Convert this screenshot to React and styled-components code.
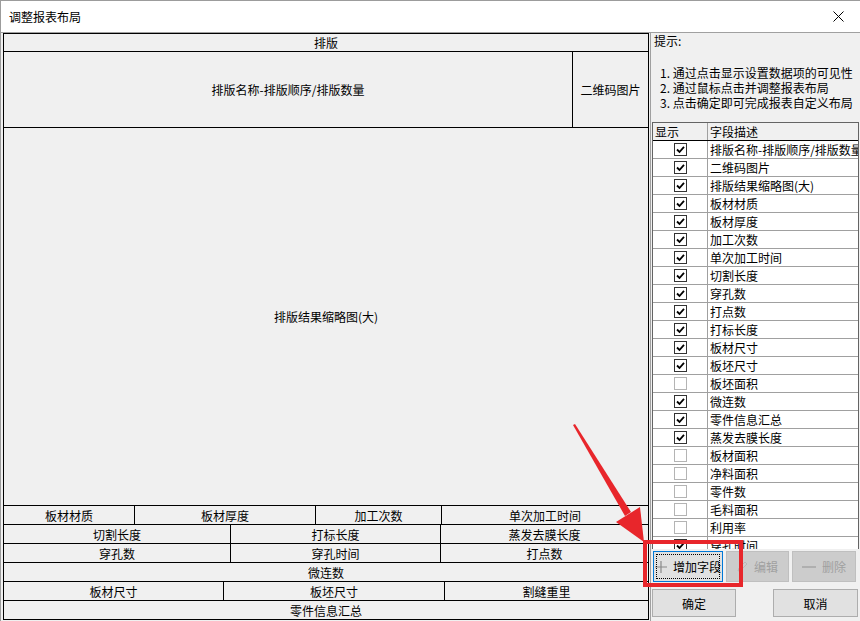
import React from 'react'
import styled, { createGlobalStyle } from 'styled-components'

const GlobalStyle = createGlobalStyle`
  html, body {
    margin: 0;
    padding: 0;
    background: #f0f0f0;
  }
  * { box-sizing: border-box; }
`

const Window = styled.div`
  position: relative;
  width: 860px;
  height: 621px;
  display: flex;
  flex-direction: column;
  background: #f0f0f0;
  border-top: 1px solid #9c9c9c;
  border-left: 1px solid #9c9c9c;
  font-family: "Noto Sans CJK SC", "Noto Sans", sans-serif;
  font-size: 12px;
  color: #000;
  overflow: hidden;
`

const TitleBar = styled.div`
  height: 31px;
  flex: none;
  background: #fff;
  display: flex;
  align-items: center;
  justify-content: space-between;
  padding: 0 16px 0 8px;
  font-size: 12px;
  line-height: 1;
`

const Body = styled.div`
  flex: 1;
  display: flex;
  min-height: 0;
  border-top: 1px solid #a0a0a0;
`

const LayoutPanel = styled.div`
  width: 646px;
  margin: 0 0 1px 2px;
  border: 1px solid #000;
  display: flex;
  flex-direction: column;
  background: #f0f0f0;
`

const Row = styled.div`
  display: flex;
  flex: ${p => (p.$grow ? 1 : 'none')};
  height: ${p => (p.$h ? `${p.$h}px` : 'auto')};
  border-bottom: 1px solid #000;
  &:last-child {
    border-bottom: none;
  }
`

const Cell = styled.div`
  display: flex;
  align-items: center;
  justify-content: center;
  flex: ${p => (p.$w ? 'none' : 1)};
  width: ${p => (p.$w ? `${p.$w}px` : 'auto')};
  border-right: 1px solid #000;
  white-space: nowrap;
  overflow: hidden;
  &:last-child {
    border-right: none;
  }
`

const SidePanel = styled.div`
  flex: 1;
  display: flex;
  flex-direction: column;
  margin-left: 1px;
  border-left: 1px solid #a0a0a0;
  padding: 0 1px 4px 1px;
  min-width: 0;
`

const HintTitle = styled.div`
  line-height: 15px;
  padding-left: 2px;
`

const HintList = styled.ol`
  margin: 17px 0 12px 0;
  padding: 0 0 0 8px;
  list-style: none;
  line-height: 15px;
  li {
    white-space: nowrap;
  }
`

const TableWrap = styled.div`
  flex: 1;
  min-height: 0;
  overflow: hidden;
  border: 1px solid #646464;
  border-bottom: none;
  background: #fff;
`

const TRow = styled.div`
  display: flex;
  height: 18px;
  background: ${p => (p.$head ? '#f0f0f0' : '#fff')};
  border-bottom: 1px solid ${p => (p.$head ? '#000' : '#a0a0a0')};
`

const TCell = styled.div`
  display: flex;
  align-items: center;
  justify-content: ${p => (p.$center ? 'center' : 'flex-start')};
  width: ${p => (p.$w ? `${p.$w}px` : 'auto')};
  flex: ${p => (p.$w ? 'none' : 1)};
  padding-left: ${p => (p.$center ? 0 : 2)}px;
  border-right: 1px solid #a0a0a0;
  white-space: nowrap;
  overflow: hidden;
  line-height: 1;
  &:last-child {
    border-right: none;
  }
`

const Box = styled.span`
  width: 13px;
  height: 13px;
  border: 1px solid ${p => (p.$on ? '#333' : '#b4b4b4')};
  background: #fff;
  display: flex;
  align-items: center;
  justify-content: center;
`

const ToolRow = styled.div`
  display: flex;
  gap: 3px;
  height: 31px;
  margin: 2px 0 0 1px;
`

const ToolButton = styled.button`
  height: 31px;
  width: ${p => p.$w}px;
  display: flex;
  align-items: center;
  justify-content: center;
  gap: 6px;
  padding: 0;
  font: inherit;
  font-size: 12px;
  color: ${p => (p.disabled ? '#a0a0a0' : '#000')};
  background: ${p => (p.disabled ? '#cccccc' : '#e1e1e1')};
  border: 1px solid ${p => (p.$focus ? '#0078d7' : p.disabled ? '#bfbfbf' : '#adadad')};
  outline: ${p => (p.$focus ? '1px dotted #000' : 'none')};
  outline-offset: -4px;
`

const FootRow = styled.div`
  display: flex;
  justify-content: space-between;
  margin-top: 7px;
  height: 28px;
  padding-right: 1px;
`

const FootButton = styled.button`
  width: ${p => p.$w}px;
  height: 28px;
  font: inherit;
  font-size: 12px;
  color: #000;
  background: #e1e1e1;
  border: 1px solid #adadad;
  padding: 0;
`

const Overlay = styled.svg`
  position: absolute;
  top: -1px;
  left: -1px;
  pointer-events: none;
`

const fields = [
  ['排版名称-排版顺序/排版数量', true],
  ['二维码图片', true],
  ['排版结果缩略图(大)', true],
  ['板材材质', true],
  ['板材厚度', true],
  ['加工次数', true],
  ['单次加工时间', true],
  ['切割长度', true],
  ['穿孔数', true],
  ['打点数', true],
  ['打标长度', true],
  ['板材尺寸', true],
  ['板坯尺寸', true],
  ['板坯面积', false],
  ['微连数', true],
  ['零件信息汇总', true],
  ['蒸发去膜长度', true],
  ['板材面积', false],
  ['净料面积', false],
  ['零件数', false],
  ['毛料面积', false],
  ['利用率', false],
  ['穿孔时间', true],
  ['割缝重里', true],
]

const Check = ({ on }) => (
  <Box $on={on}>
    {on && (
      <svg width="9" height="9" viewBox="0 0 9 9">
        <path d="M1 4.5 L3.5 7 L8 1.8" fill="none" stroke="#000" strokeWidth="1.8" />
      </svg>
    )}
  </Box>
)

export default function App() {
  return (
    <>
      <GlobalStyle />
      <Window>
        <TitleBar>
          <span>调整报表布局</span>
          <svg width="11" height="11" viewBox="0 0 11 11">
            <path d="M0.5 0.5 L10.5 10.5 M10.5 0.5 L0.5 10.5" stroke="#000" strokeWidth="1" />
          </svg>
        </TitleBar>
        <Body>
          <LayoutPanel>
            <Row $h={18}>
              <Cell>排版</Cell>
            </Row>
            <Row $h={76}>
              <Cell>排版名称-排版顺序/排版数量</Cell>
              <Cell $w={75}>二维码图片</Cell>
            </Row>
            <Row $grow>
              <Cell>排版结果缩略图(大)</Cell>
            </Row>
            <Row $h={19}>
              <Cell $w={131}>板材材质</Cell>
              <Cell $w={181}>板材厚度</Cell>
              <Cell $w={126}>加工次数</Cell>
              <Cell>单次加工时间</Cell>
            </Row>
            <Row $h={19}>
              <Cell $w={227}>切割长度</Cell>
              <Cell $w={210}>打标长度</Cell>
              <Cell>蒸发去膜长度</Cell>
            </Row>
            <Row $h={19}>
              <Cell $w={227}>穿孔数</Cell>
              <Cell $w={210}>穿孔时间</Cell>
              <Cell>打点数</Cell>
            </Row>
            <Row $h={19}>
              <Cell>微连数</Cell>
            </Row>
            <Row $h={19}>
              <Cell $w={220}>板材尺寸</Cell>
              <Cell $w={221}>板坯尺寸</Cell>
              <Cell>割缝重里</Cell>
            </Row>
            <Row $h={18}>
              <Cell>零件信息汇总</Cell>
            </Row>
          </LayoutPanel>

          <SidePanel>
            <HintTitle>提示:</HintTitle>
            <HintList>
              <li>1. 通过点击显示设置数据项的可见性</li>
              <li>2. 通过鼠标点击并调整报表布局</li>
              <li>3. 点击确定即可完成报表自定义布局</li>
            </HintList>
            <TableWrap>
              <TRow $head>
                <TCell $w={55}>显示</TCell>
                <TCell>字段描述</TCell>
              </TRow>
              {fields.map(([name, on]) => (
                <TRow key={name}>
                  <TCell $w={55} $center>
                    <Check on={on} />
                  </TCell>
                  <TCell>{name}</TCell>
                </TRow>
              ))}
            </TableWrap>
            <ToolRow>
              <ToolButton $w={70} $focus>
                <svg width="12" height="12" viewBox="0 0 12 12">
                  <path d="M6 0 V12 M0 6 H12" stroke="#8a8a8a" strokeWidth="1.2" />
                </svg>
                增加字段
              </ToolButton>
              <ToolButton $w={63} disabled>
                <svg width="11" height="11" viewBox="0 0 11 11">
                  <path d="M1 10 L2 7 L8 1 L10 3 L4 9 Z" fill="none" stroke="#b8b8b8" strokeWidth="1" />
                </svg>
                编辑
              </ToolButton>
              <ToolButton $w={64} disabled>
                <svg width="14" height="4" viewBox="0 0 14 4">
                  <path d="M0 2 H14" stroke="#a8a8a8" strokeWidth="1.6" />
                </svg>
                删除
              </ToolButton>
            </ToolRow>
            <FootRow>
              <FootButton $w={84}>确定</FootButton>
              <FootButton $w={85}>取消</FootButton>
            </FootRow>
          </SidePanel>
        </Body>

        <Overlay width="860" height="621" viewBox="0 0 860 621">
          <polygon points="573,425 575,424 631,512 625,516" fill="#e8262b" />
          <polygon points="644,542 616,522 640,507" fill="#e8262b" />
          <rect x="645" y="542" width="96" height="43" fill="none" stroke="#e8262b" strokeWidth="4" />
        </Overlay>
      </Window>
    </>
  )
}
